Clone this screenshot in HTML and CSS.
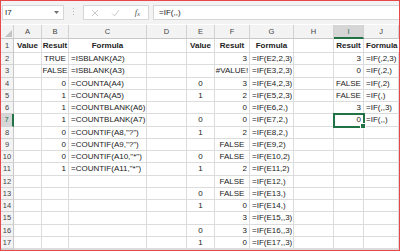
FILE: index.html
```html
<!DOCTYPE html>
<html lang="en">

<head>
    <meta charset="UTF-8">
    <meta name="viewport" content="width=device-width, initial-scale=1.0">
    <title>IF blanks</title>
    <link rel="stylesheet" href="styles.css">
</head>

<body>
    <div class="window">
        <div class="formula-bar">
            <div class="name-box">
                <span>I7</span>
                <svg width="5" height="3" viewBox="0 0 5 3"><path d="M0 0 H5 L2.5 3 Z" fill="#707070"/></svg>
            </div>
            <div class="grip">
                <svg width="2" height="9" viewBox="0 0 2 9"><rect y="0" width="1" height="1" fill="#b8b8b8"/><rect y="3" width="1" height="1" fill="#b8b8b8"/><rect y="6" width="1" height="1" fill="#b8b8b8"/></svg>
            </div>
            <div class="fx-buttons">
                <svg width="8" height="8" viewBox="0 0 8 8"><path d="M1 1 L7 7 M7 1 L1 7" stroke="#c4c4c4" stroke-width="0.9"/></svg>
                <svg width="9" height="8" viewBox="0 0 9 8"><path d="M1 4.5 L3.5 7 L8 1" stroke="#c4c4c4" stroke-width="0.9" fill="none"/></svg>
                <span class="fx">f<sub>x</sub></span>
            </div>
            <div class="formula-input">=IF(,,)</div>
        </div>

        <div class="sheet">
            <div class="row head-row">
                <div class="corner">
                    <svg width="7" height="7" viewBox="0 0 7 7"><path d="M7 0 V7 H0 Z" fill="#c3c3c3"/></svg>
                </div>
                <div>A</div><div>B</div><div>C</div><div>D</div><div>E</div>
                <div>F</div><div>G</div><div>H</div><div class="active">I</div><div>J</div>
            </div>

            <div class="row title-row">
                <div class="rh">1</div>
                <div class="b">Value</div><div class="b">Result</div><div class="b">Formula</div><div></div>
                <div class="b">Value</div><div class="b">Result</div><div class="b">Formula</div><div></div>
                <div class="b">Result</div><div class="b">Formula</div>
            </div>

            <div class="row">
                <div class="rh">2</div>
                <div></div><div class="c">TRUE</div><div>=ISBLANK(A2)</div><div></div>
                <div></div><div class="n">3</div><div>=IF(E2,2,3)</div><div></div>
                <div class="n">3</div><div>=IF(,2,3)</div>
            </div>
            <div class="row">
                <div class="rh">3</div>
                <div></div><div class="c">FALSE</div><div>=ISBLANK(A3)</div><div></div>
                <div></div><div class="c">#VALUE!</div><div>=IF(E3,2,3)</div><div></div>
                <div class="n">0</div><div>=IF(,2,)</div>
            </div>
            <div class="row">
                <div class="rh">4</div>
                <div></div><div class="n">0</div><div>=COUNTA(A4)</div><div></div>
                <div class="e">0</div><div class="n">3</div><div>=IF(E4,2,3)</div><div></div>
                <div class="c">FALSE</div><div>=IF(,2)</div>
            </div>
            <div class="row">
                <div class="rh">5</div>
                <div></div><div class="n">1</div><div>=COUNTA(A5)</div><div></div>
                <div class="e">1</div><div class="n">2</div><div>=IF(E5,2,3)</div><div></div>
                <div class="c">FALSE</div><div>=IF(,)</div>
            </div>
            <div class="row">
                <div class="rh">6</div>
                <div></div><div class="n">1</div><div>=COUNTBLANK(A6)</div><div></div>
                <div></div><div class="n">0</div><div>=IF(E6,2,)</div><div></div>
                <div class="n">3</div><div>=IF(,,3)</div>
            </div>
            <div class="row">
                <div class="rh active">7</div>
                <div></div><div class="n">1</div><div>=COUNTBLANK(A7)</div><div></div>
                <div class="e">0</div><div class="n">0</div><div>=IF(E7,2,)</div><div></div>
                <div class="n selected">0</div><div>=IF(,,)</div>
            </div>
            <div class="row">
                <div class="rh">8</div>
                <div></div><div class="n">0</div><div>=COUNTIF(A8,"?")</div><div></div>
                <div class="e">1</div><div class="n">2</div><div>=IF(E8,2,)</div><div></div>
                <div></div><div></div>
            </div>
            <div class="row">
                <div class="rh">9</div>
                <div></div><div class="n">0</div><div>=COUNTIF(A9,"?")</div><div></div>
                <div></div><div class="c">FALSE</div><div>=IF(E9,2)</div><div></div>
                <div></div><div></div>
            </div>
            <div class="row">
                <div class="rh">10</div>
                <div></div><div class="n">0</div><div>=COUNTIF(A10,"*")</div><div></div>
                <div class="e">0</div><div class="c">FALSE</div><div>=IF(E10,2)</div><div></div>
                <div></div><div></div>
            </div>
            <div class="row">
                <div class="rh">11</div>
                <div></div><div class="n">1</div><div>=COUNTIF(A11,"*")</div><div></div>
                <div class="e">1</div><div class="n">2</div><div>=IF(E11,2)</div><div></div>
                <div></div><div></div>
            </div>
            <div class="row">
                <div class="rh">12</div>
                <div></div><div></div><div></div><div></div>
                <div></div><div class="c">FALSE</div><div>=IF(E12,)</div><div></div>
                <div></div><div></div>
            </div>
            <div class="row">
                <div class="rh">13</div>
                <div></div><div></div><div></div><div></div>
                <div class="e">0</div><div class="c">FALSE</div><div>=IF(E13,)</div><div></div>
                <div></div><div></div>
            </div>
            <div class="row">
                <div class="rh">14</div>
                <div></div><div></div><div></div><div></div>
                <div class="e">1</div><div class="n">0</div><div>=IF(E14,)</div><div></div>
                <div></div><div></div>
            </div>
            <div class="row">
                <div class="rh">15</div>
                <div></div><div></div><div></div><div></div>
                <div></div><div class="n">3</div><div>=IF(E15,,3)</div><div></div>
                <div></div><div></div>
            </div>
            <div class="row">
                <div class="rh">16</div>
                <div></div><div></div><div></div><div></div>
                <div class="e">0</div><div class="n">3</div><div>=IF(E16,,3)</div><div></div>
                <div></div><div></div>
            </div>
            <div class="row">
                <div class="rh">17</div>
                <div></div><div></div><div></div><div></div>
                <div class="e">1</div><div class="n">0</div><div>=IF(E17,,3)</div><div></div>
                <div></div><div></div>
            </div>
            <div class="row filler">
                <div class="rh"></div>
                <div></div><div></div><div></div><div></div>
                <div></div><div></div><div></div><div></div>
                <div></div><div></div>
            </div>
        </div>
    </div>
</body>

</html>
```

FILE: styles.css
```css
* {
    box-sizing: border-box;
}

body {
    margin: 0;
    font-family: "Liberation Sans", Arial, sans-serif;
    color: #222;
}

.window {
    width: 400px;
    height: 251px;
    border: 1px solid #e8474c;
    background-color: #fff;
    overflow: hidden;
    display: flex;
    flex-direction: column;
}

/* Barra de fórmulas */

.formula-bar {
    flex: none;
    height: 23px;
    display: flex;
    align-items: center;
    padding-left: 1px;
    background-color: #f3f3f3;
}

.name-box {
    width: 62px;
    height: 15px;
    display: flex;
    align-items: center;
    justify-content: space-between;
    padding: 0 4px 0 2px;
    font-size: 8px;
    background-color: #fff;
    border: 1px solid #d6d6d6;
}

.grip {
    width: 19px;
    display: flex;
    justify-content: center;
}

.fx-buttons {
    width: 66px;
    height: 15px;
    display: grid;
    grid-template-columns: repeat(3, 1fr);
    justify-items: center;
    align-items: center;
    background-color: #fff;
    border: 1px solid #d6d6d6;
}

.fx {
    font-family: "Liberation Serif", serif;
    font-style: italic;
    font-size: 9px;
    color: #555;
    line-height: 1;
}

.fx sub {
    font-size: 6px;
    vertical-align: -1px;
}

.formula-input {
    flex: 1;
    height: 15px;
    margin-left: 4px;
    padding-left: 5px;
    display: flex;
    align-items: center;
    font-size: 8px;
    background-color: #fff;
    border: 1px solid #d6d6d6;
    border-right: none;
}

/* Grade da planilha */

.sheet {
    flex: 1;
    display: flex;
    flex-direction: column;
}

.row {
    display: grid;
    grid-template-columns: 13px 28px 27px 78px 40px 28px 35px 44px 40px 30px 1fr;
    height: 12.25px;
    font-size: 8px;
    white-space: nowrap;
}

.row > div {
    display: flex;
    align-items: center;
    padding: 0 2px;
    border-right: 1px solid #dcdcdc;
    border-bottom: 1px solid #dcdcdc;
}

.head-row {
    height: 14px;
    margin-top: 1px;
    font-size: 7.5px;
    color: #444;
}

.head-row > div {
    justify-content: center;
    background-color: #f3f3f3;
    border-right-color: #d2d2d2;
    border-bottom-color: #c8c8c8;
}

.head-row .corner {
    align-items: flex-end;
    justify-content: flex-end;
    padding: 0 1px 1px 0;
}

.title-row {
    height: 14px;
}

.filler {
    flex: 1;
}

.row > .rh {
    justify-content: center;
    padding: 0;
    font-size: 7.5px;
    color: #444;
    background-color: #f3f3f3;
    border-right-color: #c8c8c8;
    border-bottom-color: #d2d2d2;
}

.head-row > .active {
    color: #217346;
    background-color: #d6d6d6;
    border-bottom: 2px solid #217346;
}

.row > .rh.active {
    color: #217346;
    background-color: #d6d6d6;
    border-right: 2px solid #217346;
}

.row > .b {
    justify-content: center;
    font-weight: bold;
}

.row > .c,
.row > .e {
    justify-content: center;
}

.row > .n {
    justify-content: flex-end;
}

.row > .selected {
    position: relative;
    outline: 2px solid #217346;
    outline-offset: -1px;
}

.selected::after {
    content: '';
    position: absolute;
    right: -3px;
    bottom: -3px;
    width: 4px;
    height: 4px;
    background-color: #217346;
    border: 1px solid #fff;
}
```
